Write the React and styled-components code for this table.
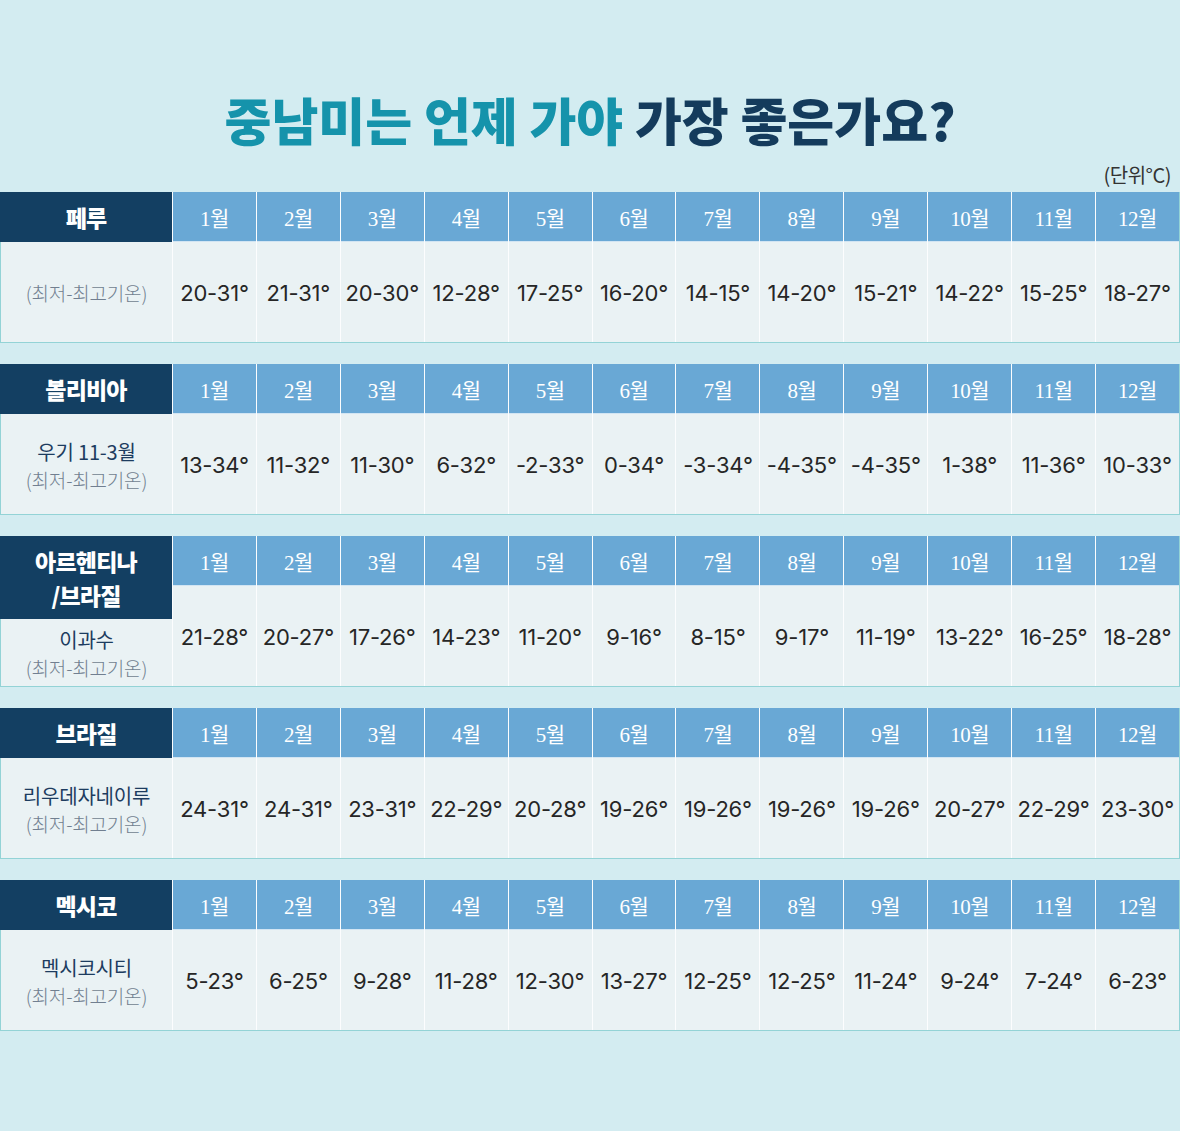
import React from "react";
import styled, { createGlobalStyle } from "styled-components";

const GlobalStyle = createGlobalStyle`
    html, body {
        margin: 0;
        padding: 0;
        background: #d3ecf1;
    }
    body {
        font-family: "Noto Sans CJK KR", "Noto Sans", sans-serif;
    }
`;

const MONTHS = ["1월", "2월", "3월", "4월", "5월", "6월", "7월", "8월", "9월", "10월", "11월", "12월"];

const COUNTRIES = [
    {
        name: ["페루"],
        city: null,
        temps: ["20-31", "21-31", "20-30", "12-28", "17-25", "16-20", "14-15", "14-20", "15-21", "14-22", "15-25", "18-27"],
    },
    {
        name: ["볼리비아"],
        city: "우기 11-3월",
        temps: ["13-34", "11-32", "11-30", "6-32", "-2-33", "0-34", "-3-34", "-4-35", "-4-35", "1-38", "11-36", "10-33"],
    },
    {
        name: ["아르헨티나", "/브라질"],
        city: "이과수",
        temps: ["21-28", "20-27", "17-26", "14-23", "11-20", "9-16", "8-15", "9-17", "11-19", "13-22", "16-25", "18-28"],
    },
    {
        name: ["브라질"],
        city: "리우데자네이루",
        temps: ["24-31", "24-31", "23-31", "22-29", "20-28", "19-26", "19-26", "19-26", "19-26", "20-27", "22-29", "23-30"],
    },
    {
        name: ["멕시코"],
        city: "멕시코시티",
        temps: ["5-23", "6-25", "9-28", "11-28", "12-30", "13-27", "12-25", "12-25", "11-24", "9-24", "7-24", "6-23"],
    },
];

const App = () => {
    return (
        <Page>
            <GlobalStyle />
            <Title>
                <Teal>중남미는 언제 가야</Teal> 가장 좋은가요?
            </Title>
            <Unit>(단위°C)</Unit>
            {COUNTRIES.map((country) => (
                <Block key={country.name.join("")}>
                    <LabelColumn>
                        <CountryCell tall={country.name.length > 1}>
                            {country.name.map((line) => (
                                <CountryName key={line}>{line}</CountryName>
                            ))}
                        </CountryCell>
                        <LabelCell>
                            {country.city && <City>{country.city}</City>}
                            <Sub>(최저-최고기온)</Sub>
                        </LabelCell>
                    </LabelColumn>
                    {MONTHS.map((month, i) => (
                        <MonthColumn key={month}>
                            <MonthHead>{month}</MonthHead>
                            <TempCell>{country.temps[i]}°</TempCell>
                        </MonthColumn>
                    ))}
                </Block>
            ))}
        </Page>
    );
};

const Page = styled.div`
    width: 1180px;
    min-height: 1131px;
    background: #d3ecf1;
    padding-bottom: 20px;
    box-sizing: border-box;
`;

const Title = styled.h1`
    margin: 0;
    padding-top: 88px;
    font-family: "Noto Sans CJK KR", sans-serif;
    font-weight: 900;
    font-size: 51px;
    line-height: 62px;
    letter-spacing: 0;
    text-align: center;
    color: #143b5c;
`;

const Teal = styled.span`
    color: #1593ab;
`;

const Unit = styled.div`
    margin: 12px 0 4px;
    padding-right: 9px;
    text-align: right;
    font-family: "Noto Sans CJK KR", sans-serif;
    font-size: 20px;
    line-height: 26px;
    letter-spacing: -0.5px;
    color: #333;
`;

const Block = styled.div`
    display: grid;
    grid-template-columns: 171px repeat(12, 1fr);
    height: 151px;
    margin-bottom: 21px;
    border: 1px solid #93d3d6;
    border-top: none;
    box-sizing: border-box;
    background: #eaf2f4;
`;

const LabelColumn = styled.div`
    display: flex;
    flex-direction: column;
`;

const CountryCell = styled.div`
    height: ${(p) => (p.tall ? "83px" : "50px")};
    flex-shrink: 0;
    display: flex;
    flex-direction: column;
    align-items: center;
    justify-content: center;
    background: #133f62;
    margin-left: -1px;
`;

const CountryName = styled.div`
    color: #fff;
    font-weight: 900;
    font-size: 23px;
    line-height: 34px;
    letter-spacing: -0.8px;
    text-align: center;
`;

const LabelCell = styled.div`
    flex: 1;
    display: flex;
    flex-direction: column;
    align-items: center;
    justify-content: center;
    padding-top: 2px;
`;

const City = styled.div`
    font-size: 20px;
    line-height: 29px;
    letter-spacing: -0.2px;
    color: #1d3c5f;
`;

const Sub = styled.div`
    font-size: 19px;
    font-weight: 300;
    line-height: 28px;
    letter-spacing: -0.2px;
    color: #717f90;
`;

const MonthColumn = styled.div`
    display: flex;
    flex-direction: column;
    border-left: 1px solid rgba(255, 255, 255, 0.85);
`;

const MonthHead = styled.div`
    height: 50px;
    flex-shrink: 0;
    display: flex;
    align-items: center;
    justify-content: center;
    background: #69a8d5;
    border-bottom: 1px solid rgba(255, 255, 255, 0.7);
    box-sizing: border-box;
    color: #fff;
    font-family: "Liberation Serif", "Noto Sans CJK KR", serif;
    font-size: 21px;
    letter-spacing: -0.5px;
`;

const TempCell = styled.div`
    flex: 1;
    display: flex;
    align-items: center;
    justify-content: center;
    font-family: "Inter", "Noto Sans", sans-serif;
    font-size: 22px;
    letter-spacing: -0.2px;
    color: #262626;
    padding-top: 2px;
`;

export default App;
